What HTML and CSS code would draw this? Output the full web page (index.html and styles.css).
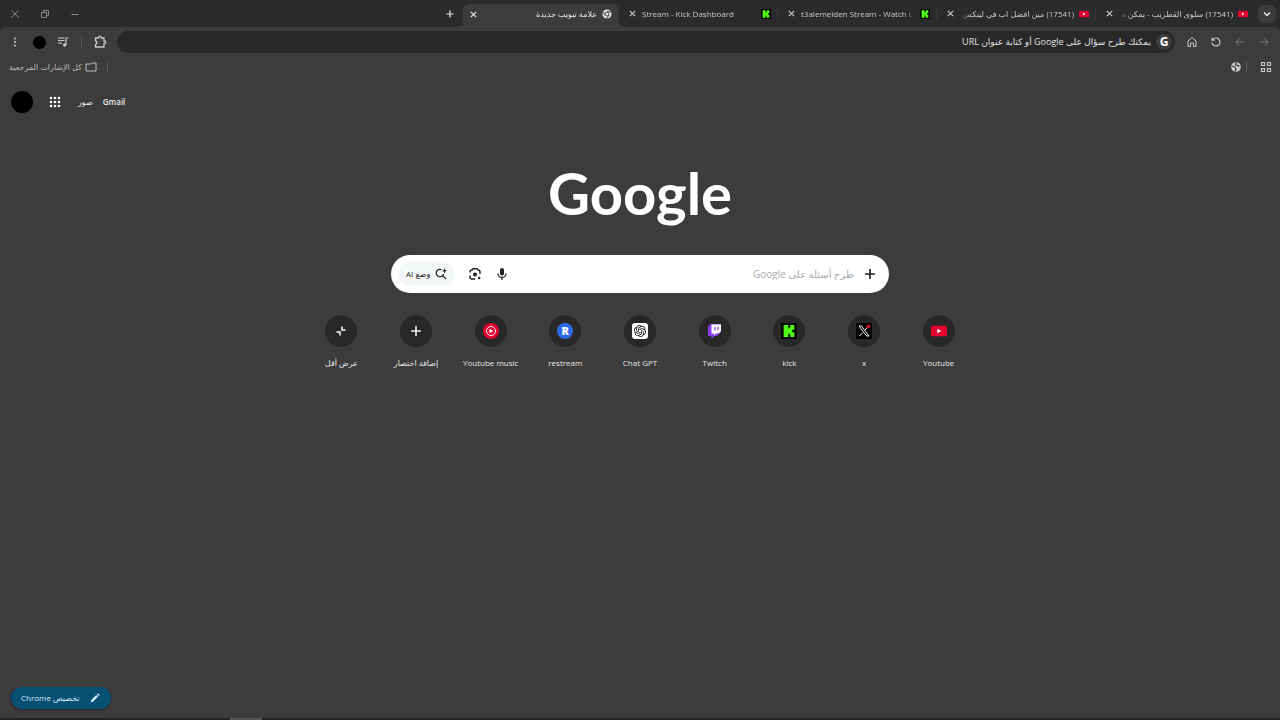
FILE: index.html
```
<!DOCTYPE html>
<html lang="ar" dir="rtl">
<head>
  <meta charset="UTF-8">
  <title>علامة تبويب جديدة</title>
  <link rel="stylesheet" href="styles.css">
</head>
<body>
  <!-- shared icons -->
  <svg class="sprite" aria-hidden="true">
    <symbol id="i-youtube" viewBox="0 0 24 24"><rect x="0" y="4" width="24" height="16" rx="3" fill="#e4002f"/><path d="M9.500 8.500v7l6-3.500z" fill="#fff"/></symbol>
    <symbol id="i-kick" viewBox="0 0 24 24"><rect width="24" height="24" fill="#050b04"/><g fill="#53fc18"><rect x="4" y="3" width="7" height="18"/><rect x="10" y="8" width="4" height="8"/><rect x="13" y="6" width="4" height="12"/><rect x="14" y="3" width="6" height="7"/><rect x="14" y="14" width="6" height="7"/></g></symbol>
    <symbol id="i-close" viewBox="0 0 10 10"><path d="M2 2l6 6M8 2L2 8" fill="none" stroke="currentColor" stroke-width="1.300"/></symbol>
    <symbol id="i-plus" viewBox="0 0 14 14"><path d="M7 2v10M2 7h10" fill="none" stroke="currentColor" stroke-width="1.700"/></symbol>
    <symbol id="i-arrow" viewBox="0 0 12 12"><path d="M2 6h8M6.500 2.500L10 6l-3.500 3.500" fill="none" stroke="currentColor"/></symbol>
  </svg>

  <header class="browser">
    <div class="tab-strip">
      <button class="tab-search" aria-label="البحث في علامات التبويب"><svg viewBox="0 0 10 10"><path d="M2 3.500l3 3 3-3" fill="none" stroke="currentColor" stroke-width="1.500"/></svg></button>
      <div class="tab">
        <svg class="favicon"><use href="#i-youtube"/></svg>
        <span class="tab-title" dir="rtl">(17541) سلوى القطريب - يمكن ه</span>
        <button class="tab-close" aria-label="إغلاق"><svg><use href="#i-close"/></svg></button>
      </div>
      <div class="tab">
        <svg class="favicon"><use href="#i-youtube"/></svg>
        <span class="tab-title" dir="rtl">(17541) مين افضل اب في لينكس</span>
        <button class="tab-close" aria-label="إغلاق"><svg><use href="#i-close"/></svg></button>
      </div>
      <div class="tab">
        <svg class="favicon"><use href="#i-kick"/></svg>
        <span class="tab-title" dir="ltr">t3alemelden Stream - Watch Li</span>
        <button class="tab-close" aria-label="إغلاق"><svg><use href="#i-close"/></svg></button>
      </div>
      <div class="tab">
        <svg class="favicon"><use href="#i-kick"/></svg>
        <span class="tab-title" dir="ltr">Stream - Kick Dashboard</span>
        <button class="tab-close" aria-label="إغلاق"><svg><use href="#i-close"/></svg></button>
      </div>
      <div class="tab active">
        <svg class="favicon" viewBox="0 0 12 12"><circle cx="6" cy="6" r="5.500" fill="#ddd"/><circle cx="6" cy="6" r="2.400" fill="#ddd" stroke="#3a3a3a"/><path d="M6 3.300h5M3.600 7.300L1.200 3.200M8.400 7.300L5.900 11.400" stroke="#3a3a3a"/></svg>
        <span class="tab-title" dir="rtl">علامة تبويب جديدة</span>
        <button class="tab-close" aria-label="إغلاق"><svg><use href="#i-close"/></svg></button>
      </div>
      <button class="new-tab" aria-label="علامة تبويب جديدة"><svg><use href="#i-plus"/></svg></button>
      <div class="window-controls">
        <button aria-label="تصغير"><svg viewBox="0 0 10 10"><path d="M1.500 5.500h7"/></svg></button>
        <button aria-label="استعادة"><svg viewBox="0 0 10 10"><path d="M1.500 3.500h5v5h-5zM3.500 3V1.500h5v5H7"/></svg></button>
        <button aria-label="إغلاق النافذة"><svg viewBox="0 0 10 10"><path d="M1.500 1.500l7 7M8.500 1.500l-7 7"/></svg></button>
      </div>
    </div>

    <div class="toolbar">
      <button class="tool dim" aria-label="رجوع"><svg><use href="#i-arrow"/></svg></button>
      <button class="tool dim flip" aria-label="تقدم"><svg><use href="#i-arrow"/></svg></button>
      <button class="tool" aria-label="إعادة تحميل"><svg viewBox="0 0 12 12"><path d="M2.500 4A4 4 0 1 1 2 6.500M2 1.500V4.200h2.700" fill="none" stroke="currentColor" stroke-width="1.200"/></svg></button>
      <button class="tool" aria-label="الصفحة الرئيسية"><svg viewBox="0 0 12 12"><path d="M2 10.500V5l4-3.500L10 5v5.500H7.500V7h-3v3.500z" fill="none" stroke="currentColor"/></svg></button>
      <div class="omnibox">
        <span class="g-chip">G</span>
        <input type="text" aria-label="شريط العناوين" placeholder="يمكنك طرح سؤال على Google أو كتابة عنوان URL">
      </div>
      <button class="tool" aria-label="الإضافات"><svg class="big" viewBox="0 0 14 14"><path d="M2.500 3h3V2.500a1 1 0 0 1 2.500 0V3h3v3h.5a1.200 1.200 0 0 1 0 2.500H11V12H2.500V9.500c2-.5 2-3 0-3.500z" fill="none" stroke="currentColor" stroke-width="1.300"/></svg></button>
      <span class="divider"></span>
      <button class="tool" aria-label="الوسائط"><svg viewBox="0 0 12 12"><path d="M1 2h6.500M1 4.500h6.500M1 7h4M9 9V2h2.500" fill="none" stroke="currentColor" stroke-width="1.200"/><circle cx="7.700" cy="9" r="1.700" fill="currentColor"/></svg></button>
      <button class="tool" aria-label="الملف الشخصي"><span class="avatar"></span></button>
      <button class="tool" aria-label="القائمة"><svg viewBox="0 0 12 12" fill="currentColor"><circle cx="6" cy="2.500" r="1"/><circle cx="6" cy="6" r="1"/><circle cx="6" cy="9.500" r="1"/></svg></button>
    </div>

    <div class="bookmarks">
      <button class="tool" aria-label="التطبيقات"><svg viewBox="0 0 12 12"><path d="M1.500 1.500h3v3h-3zM7.500 1.500h3v3h-3zM1.500 7.500h3v3h-3zM7.500 7.500h3v3h-3z" fill="none" stroke="currentColor" stroke-width="1.200"/></svg></button>
      <span class="divider"></span>
      <a class="site" href="#" aria-label="موقع"><svg viewBox="0 0 12 12"><circle cx="6" cy="6" r="4.800" fill="#ccc"/><path d="M2 5l3 1 1 2-1 2.500M6.500 1.500L5.500 3.500l1.500 1 2.500.5" fill="none" stroke="#3c3c3c" stroke-width="1.300"/></svg></a>
      <span class="divider last"></span>
      <button class="all-bookmarks"><svg viewBox="0 0 12 10"><path d="M1 2h5.500L7.500 1H11v8H1z" fill="none" stroke="currentColor"/></svg><span>كل الإشارات المرجعية</span></button>
    </div>
  </header>

  <main>
    <nav class="account">
      <a class="mail" href="#">Gmail</a>
      <a class="images" href="#">صور</a>
      <button aria-label="تطبيقات Google"><svg viewBox="0 0 12 12" fill="#fff"><circle cx="2" cy="2" r="1.300"/><circle cx="6" cy="2" r="1.300"/><circle cx="10" cy="2" r="1.300"/><circle cx="2" cy="6" r="1.300"/><circle cx="6" cy="6" r="1.300"/><circle cx="10" cy="6" r="1.300"/><circle cx="2" cy="10" r="1.300"/><circle cx="6" cy="10" r="1.300"/><circle cx="10" cy="10" r="1.300"/></svg></button>
      <button aria-label="الحساب"><span class="avatar large"></span></button>
    </nav>

    <h1 class="logo">Google</h1>

    <form class="search">
      <button type="button" class="search-icon" aria-label="إضافة"><svg><use href="#i-plus"/></svg></button>
      <input type="text" aria-label="بحث" placeholder="طرح أسئلة على Google">
      <button type="button" class="search-icon" aria-label="بحث صوتي"><svg viewBox="0 0 14 14"><rect x="5" y="1" width="4" height="7.500" rx="2" fill="#222"/><path d="M3 6.500a4 4 0 0 0 8 0M7 10.500V13" fill="none" stroke="#222" stroke-width="1.300"/></svg></button>
      <button type="button" class="search-icon" aria-label="بحث بالصور"><svg viewBox="0 0 14 14"><path d="M2 5.500V5a2 2 0 0 1 2-2l1-1.200h4L10 3a2 2 0 0 1 2 2v2M2 8.500V10a2 2 0 0 0 2 2h3" fill="none" stroke="#222" stroke-width="1.400"/><circle cx="7" cy="7.500" r="2" fill="#222"/><circle cx="11.200" cy="11" r="1.200" fill="#222"/></svg></button>
      <button type="button" class="ai-mode"><svg viewBox="0 0 12 12"><path d="M6.500 1.700A3.700 3.700 0 1 0 8.500 6M7.300 7.300L11 11" fill="none" stroke="#222" stroke-width="1.200"/><path d="M9.500 0q.3 2.500 2.500 2.800-2.200.3-2.500 2.800-.3-2.500-2.500-2.800Q9.200 2.500 9.500 0z" fill="#222"/></svg><span>وضع AI</span></button>
    </form>

    <div class="shortcuts">
      <a href="#"><span class="tile"><svg><use href="#i-youtube"/></svg></span><span>Youtube</span></a>
      <a href="#"><span class="tile"><svg viewBox="0 0 16 16"><rect width="16" height="16" fill="#000"/><path d="M3 3h2.500l7.500 10h-2.500z" fill="none" stroke="#eee"/><path d="M12.500 3L9 7M7 9.500L3.500 13" stroke="#eee"/><circle cx="12.500" cy="3.500" r="2" fill="#c8102e"/></svg></span><span>x</span></a>
      <a href="#"><span class="tile"><svg><use href="#i-kick"/></svg></span><span>kick</span></a>
      <a href="#"><span class="tile"><svg viewBox="0 0 16 16"><path d="M3.500 1L1 4v9h3.500v2.500L7.500 13h2.500l4-4V1z" fill="#8b3df0"/><path d="M4.500 1.500H14V8l-2.500 2.500H9L7 12.500v-2H4.500z" fill="#fff"/><path d="M8 4v3.500M11 4v3.500" stroke="#8b3df0" stroke-width="1.200"/></svg></span><span>Twitch</span></a>
      <a href="#"><span class="tile"><svg viewBox="-4 -4 32 32"><rect x="-4" y="-4" width="32" height="32" rx="6" fill="#fff"/><path fill="#111" d="M22.282 9.821a5.985 5.985 0 0 0-.516-4.911 6.046 6.046 0 0 0-6.510-2.900A6.065 6.065 0 0 0 4.981 4.182a5.985 5.985 0 0 0-3.998 2.900 6.046 6.046 0 0 0 .743 7.097 5.980 5.980 0 0 0 .511 4.911 6.051 6.051 0 0 0 6.515 2.900A5.985 5.985 0 0 0 13.260 24a6.056 6.056 0 0 0 5.772-4.206 5.989 5.989 0 0 0 3.998-2.900 6.056 6.056 0 0 0-.748-7.073zm-9.022 12.608a4.476 4.476 0 0 1-2.876-1.041l.142-.080 4.778-2.758a.795.795 0 0 0 .393-.681v-6.737l2.020 1.169a.071.071 0 0 1 .038.061v5.583a4.504 4.504 0 0 1-4.495 4.494zm-9.661-4.125a4.471 4.471 0 0 1-.535-3.014l.142.085 4.783 2.758a.771.771 0 0 0 .781 0l5.843-3.368v2.332a.080.080 0 0 1-.033.062L9.740 19.950a4.499 4.499 0 0 1-6.141-1.646zM2.341 7.896a4.485 4.485 0 0 1 2.366-1.973V11.600a.766.766 0 0 0 .388.677l5.814 3.354-2.020 1.168a.076.076 0 0 1-.071 0l-4.830-2.786A4.504 4.504 0 0 1 2.341 7.872zm16.596 3.856L13.104 8.364 15.119 7.200a.076.076 0 0 1 .071 0l4.830 2.791a4.494 4.494 0 0 1-.677 8.104v-5.677a.790.790 0 0 0-.407-.667zm2.011-3.023l-.142-.085-4.774-2.782a.776.776 0 0 0-.785 0L9.409 9.230V6.897a.066.066 0 0 1 .028-.061l4.830-2.787a4.499 4.499 0 0 1 6.680 4.660zM8.307 12.863l-2.020-1.164a.080.080 0 0 1-.038-.057V6.074a4.499 4.499 0 0 1 7.376-3.454l-.142.081L8.704 5.459a.795.795 0 0 0-.393.681zm1.098-2.365l2.602-1.500 2.607 1.500v2.999l-2.597 1.500-2.607-1.500z"/></svg></span><span>Chat GPT</span></a>
      <a href="#"><span class="tile"><span class="restream">R</span></span><span>restream</span></a>
      <a href="#"><span class="tile"><svg viewBox="0 0 16 16"><circle cx="8" cy="8" r="8" fill="#e4002f"/><circle cx="8" cy="8" r="4.500" fill="none" stroke="#fff"/><path d="M6.500 5.700v4.600L10.300 8z" fill="#fff"/></svg></span><span>Youtube music</span></a>
      <button><span class="tile"><svg class="add"><use href="#i-plus"/></svg></span><span>إضافة اختصار</span></button>
      <button><span class="tile"><svg viewBox="0 0 16 16"><path d="M9 3.500V7h3.500M3.500 9H7v3.500" fill="none" stroke="#fff" stroke-width="1.500"/></svg></span><span>عرض أقل</span></button>
    </div>

    <button class="customize"><svg viewBox="0 0 12 12"><path d="M2 10V8.300L7.300 3 9 4.700 3.700 10zM7.900 2.400L9 1.300 10.700 3 9.600 4.100z" fill="currentColor"/></svg><span>تخصيص Chrome</span></button>
  </main>
  <footer class="taskbar"><span></span></footer>
</body>
</html>
```
FILE: styles.css
```
* {
  box-sizing: border-box;
}
body {
  margin: 0;
  min-height: 100vh;
  display: flex;
  flex-direction: column;
  background-color: #3c3c3c;
  color: #e8e8e8;
  font-family: "Open Sans", "Noto Sans", "DejaVu Sans", sans-serif;
  font-size: 8px;
  line-height: 12px;
}
button, input {
  font: inherit;
  color: inherit;
  background: none;
  border: none;
  padding: 0;
  outline: none;
}
button {
  display: flex;
  align-items: center;
  justify-content: center;
  cursor: pointer;
}
a {
  color: inherit;
  text-decoration: none;
}
svg {
  width: 12px;
  height: 12px;
  flex: none;
}
.sprite {
  position: absolute;
  width: 0;
  height: 0;
}

/* tabs */
.browser {
  background-color: #2b2b2b;
}
.tab-strip {
  display: flex;
  align-items: center;
  height: 27px;
  padding: 0 4px 0 0;
}
.tab-search {
  width: 18px;
  height: 18px;
  margin-left: 4px;
  border-radius: 6px;
  background-color: #3c3c3c;
}
.tab-search svg {
  width: 10px;
  height: 10px;
}
.tab {
  display: flex;
  align-items: center;
  gap: 5px;
  flex: 0 1 159px;
  min-width: 0;
  height: 14px;
  padding: 0 6px 0 9px;
  border-left: 1px solid #383838;
  color: #c8c8c8;
}
.tab.active {
  position: relative;
  flex-basis: 155px;
  height: 23px;
  margin-top: 4px;
  padding: 0 6px 3px 6px;
  border: none;
  border-radius: 6px 6px 0 0;
  background-color: #3c3c3c;
  color: #e8e8e8;
}
/* curved feet of the active tab */
.tab.active::before, .tab.active::after {
  content: "";
  position: absolute;
  bottom: 0;
  width: 6px;
  height: 6px;
}
.tab.active::before {
  left: 100%;
  background: radial-gradient(circle at 100% 0, transparent 6px, #3c3c3c 6px);
}
.tab.active::after {
  right: 100%;
  background: radial-gradient(circle at 0 0, transparent 6px, #3c3c3c 6px);
}
.favicon {
  width: 10px;
  height: 10px;
}
.tab-title {
  flex: 1;
  min-width: 0;
  overflow: hidden;
  white-space: nowrap;
  mask-image: linear-gradient(to right, #000 90%, transparent);
}
.tab-title[dir="rtl"] {
  mask-image: linear-gradient(to left, #000 90%, transparent);
}
.tab-close svg {
  width: 9px;
  height: 9px;
}
.new-tab {
  width: 27px;
}
.new-tab svg {
  width: 10px;
  height: 10px;
}
.window-controls {
  display: flex;
  margin-right: auto;
  color: #888;
}
.window-controls button {
  width: 30px;
}
.window-controls svg {
  width: 10px;
  height: 10px;
  fill: none;
  stroke: currentColor;
}

/* toolbar */
.toolbar {
  display: flex;
  align-items: center;
  height: 30px;
  padding: 0 4px 0 3px;
  background-color: #3c3c3c;
  border-radius: 6px 6px 0 0;
}
.tool {
  width: 24px;
  height: 24px;
  color: #c8c8c8;
}
.tool.dim {
  color: #777;
}
.tool.flip svg {
  transform: scaleX(-1);
}
.tool .big {
  width: 14px;
  height: 14px;
}
.omnibox {
  display: flex;
  align-items: center;
  gap: 5px;
  flex: 1;
  height: 22px;
  margin: 0 5px;
  padding: 0 3px;
  border-radius: 11px;
  background-color: #282828;
}
.omnibox input {
  flex: 1;
  min-width: 0;
  font-size: 9px;
}
.omnibox input::placeholder {
  color: #e0e0e0;
  opacity: 1;
}
.g-chip {
  width: 16px;
  height: 16px;
  border-radius: 8px;
  background-color: #3c3c3c;
  color: #fff;
  font: bold 12px/16px "Open Sans", sans-serif;
  text-align: center;
}
.divider {
  width: 1px;
  height: 10px;
  margin: 0 6px;
  background-color: #5c5c5c;
}
.avatar {
  width: 13px;
  height: 13px;
  border-radius: 50%;
  background-color: #000;
}
.avatar.large {
  width: 22px;
  height: 22px;
}

/* bookmarks */
.bookmarks {
  display: flex;
  align-items: center;
  height: 24px;
  padding: 0 2px 3px 9px;
  background-color: #3c3c3c;
  border-bottom: 1px solid #404040;
  color: #bbb;
}
.bookmarks .divider {
  margin: 0 7px 0 4px;
}
.bookmarks .divider.last {
  margin: 0 auto 0 10px;
}
.site {
  height: 12px;
}
.site svg {
  display: block;
}
.all-bookmarks {
  gap: 3px;
}

/* page */
main {
  flex: 1;
  display: flex;
  flex-direction: column;
  align-items: center;
}
.account {
  display: flex;
  align-items: center;
  align-self: flex-end;
  height: 22px;
  margin: 10px 0 0 11px;
}
.account .mail {
  font-weight: 600;
}
.account .images {
  margin: 0 10px 0 17px;
}
.account button:last-child {
  margin-right: 16px;
}
.logo {
  margin: 40px 0 0;
  font: 700 58px/80px Lato, sans-serif;
  color: #fff;
}
.search {
  display: flex;
  align-items: center;
  width: 498px;
  max-width: 90%;
  height: 38px;
  margin-top: 22px;
  padding: 0 12px 0 7px;
  border-radius: 19px;
  background-color: #fff;
  color: #222;
}
.search input {
  flex: 1;
  min-width: 0;
  margin-right: 9px;
  font-size: 10px;
}
.search input::placeholder {
  color: #aaa;
  opacity: 1;
}
.search-icon svg {
  width: 14px;
  height: 14px;
}
.search-icon + .search-icon {
  margin-right: 13px;
}
.ai-mode {
  gap: 5px;
  height: 24px;
  margin-right: 13px;
  padding: 0 8px;
  border-radius: 12px;
  background-color: #f4f7f7;
  font-weight: 500;
}
.shortcuts {
  display: grid;
  grid-template-columns: repeat(9, 1fr);
  width: 672px;
  max-width: 100%;
  margin-top: 22px;
}
.shortcuts a, .shortcuts button {
  display: flex;
  flex-direction: column;
  align-items: center;
  gap: 10px;
  white-space: nowrap;
}
.tile {
  display: flex;
  align-items: center;
  justify-content: center;
  width: 32px;
  height: 32px;
  border-radius: 50%;
  background-color: #282828;
}
.tile svg {
  width: 16px;
  height: 16px;
}
.tile .add {
  width: 14px;
  height: 14px;
}
.restream {
  width: 16px;
  height: 16px;
  border-radius: 50%;
  background-color: #2f6be8;
  color: #fff;
  font-size: 11px;
  font-weight: 800;
  line-height: 16px;
  text-align: center;
}
.customize {
  align-self: flex-end;
  gap: 9px;
  height: 22px;
  margin: auto 0 9px 11px;
  padding: 0 10px;
  border-radius: 11px;
  background-color: #084f74;
  color: #d0ecfa;
  box-shadow: 0 1px 3px rgba(0,0,0,0.4);
}
.taskbar {
  height: 2px;
  background-color: #242424;
  direction: ltr;
}
.taskbar span {
  display: block;
  width: 32px;
  height: 2px;
  margin-left: 18%;
  background-color: #555;
}
```
